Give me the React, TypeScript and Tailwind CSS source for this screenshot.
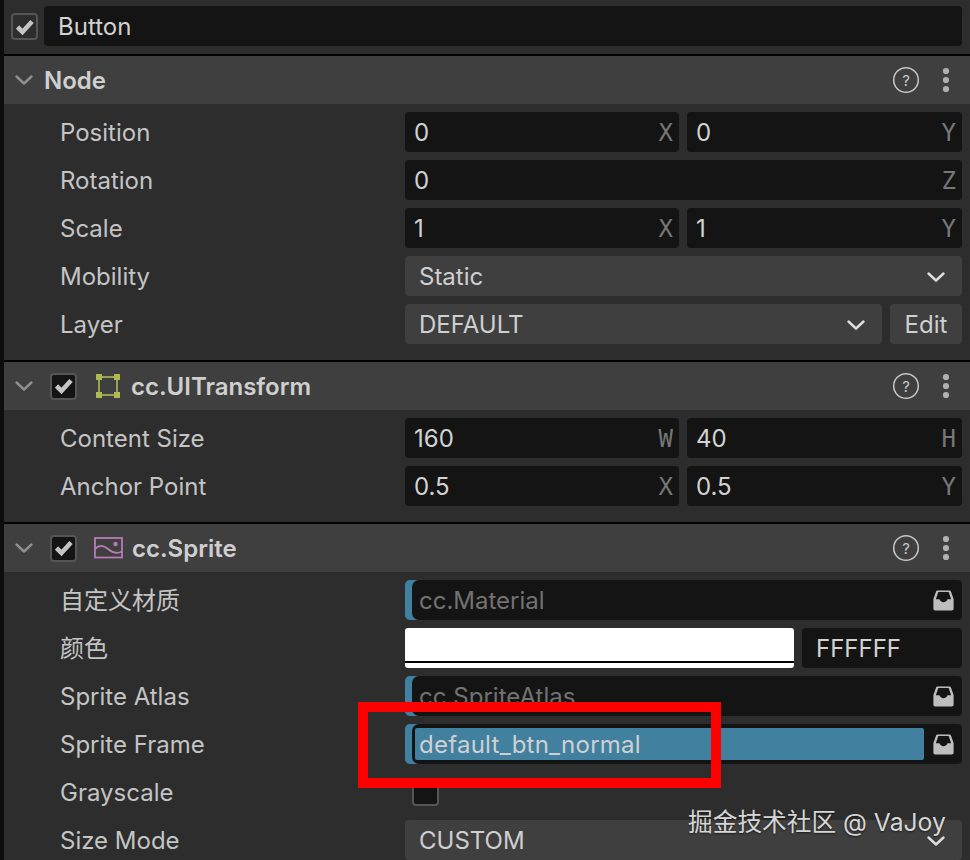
import React from "react";

const Chevron = ({ className = "" }: { className?: string }) => (
  <svg width="20" height="12" viewBox="0 0 20 12" className={className} fill="none" stroke="currentColor" strokeWidth="2.4" strokeLinecap="round" strokeLinejoin="round">
    <path d="M2.5 2.5 10 9.5 17.5 2.5" />
  </svg>
);

const Check = ({ dark = false, className = "" }: { dark?: boolean; className?: string }) => (
  <div className={`flex h-[27px] w-[27px] shrink-0 items-center justify-center rounded-[4px] border-2 border-[#555555] ${dark ? "bg-[#141414]" : "bg-[#2d2d2d]"} ${className}`}>
    <svg width="20" height="18" viewBox="0 0 20 18" fill="none" stroke="#c4c4c4" strokeWidth="4.6" strokeLinejoin="miter">
      <path d="M2.5 9 7.5 14 17 3.5" />
    </svg>
  </div>
);

const HelpMenu = () => (
  <div className="ml-auto flex items-center">
    <svg width="28" height="28" viewBox="0 0 28 28" fill="none" className="mr-[22px]">
      <circle cx="14" cy="14" r="12.3" stroke="#c8c8c8" strokeWidth="1.5" />
      <text x="14" y="19.5" textAnchor="middle" fontSize="15" fill="#c8c8c8" fontFamily="Inter, sans-serif">?</text>
    </svg>
    <svg width="8" height="26" viewBox="0 0 8 26" className="mr-[20px]">
      <circle cx="4" cy="4" r="3.1" fill="#b0b0b0" />
      <circle cx="4" cy="13" r="3.1" fill="#b0b0b0" />
      <circle cx="4" cy="22" r="3.1" fill="#b0b0b0" />
    </svg>
  </div>
);

const Header = ({ title, check, icon, tx }: { title: string; check?: boolean; icon?: React.ReactNode; tx: string }) => (
  <div className="flex h-[48px] items-center bg-[#3f3f3f]">
    <Chevron className="ml-[10px] mr-[14px] text-[#8f8f8f]" />
    {check && <Check dark className="ml-[2px]" />}
    {icon}
    <span className={`${tx} pt-[2px] text-[24px] font-semibold text-[#cfcfcf]`}>{title}</span>
    <HelpMenu />
  </div>
);

const Row = ({ label, children }: { label: string; children: React.ReactNode }) => (
  <div className="flex h-[40px] items-center pr-[8px]">
    <div className="w-[401px] shrink-0 pl-[56px] pt-[2px] text-[24px] text-[#c4c4c4]">{label}</div>
    <div className="flex min-w-0 flex-1 gap-[8px]">{children}</div>
  </div>
);

const Num = ({ v, a, first = false }: { v: string; a: string; first?: boolean }) => (
  <div className={`flex h-[40px] min-w-0 items-center justify-between rounded-[4px] bg-[#141414] pl-[9px] pr-[6px] pt-[2px] ${first ? "w-[274px] shrink-0" : "flex-1"}`}>
    <span className="text-[24px] text-[#d2d2d2]">{v}</span>
    <span className="font-['DejaVu_Sans_Mono',monospace] text-[24px] text-[#777777]">{a}</span>
  </div>
);

const Select = ({ v, cls = "flex-1", chev = "mr-[16px]" }: { v: string; cls?: string; chev?: string }) => (
  <div className={`flex h-[40px] min-w-0 ${cls} items-center justify-between rounded-[4px] bg-[#3f3f3f] pl-[14px] pt-[2px]`}>
    <span className="text-[24px] text-[#cfcfcf]">{v}</span>
    <Chevron className={`${chev} text-[#dddddd]`} />
  </div>
);

const Inbox = () => (
  <svg width="21" height="21" viewBox="0 0 22 22" className="shrink-0">
    <path fillRule="evenodd" fill="#bdbdbd" d="M5 0.5H17C18 0.5 18.6 1 19 2L21.6 9.5V19.5C21.6 20.8 20.8 21.5 19.5 21.5H2.5C1.2 21.5 0.4 20.8 0.4 19.5V9.5L3 2C3.4 1 4 0.5 5 0.5ZM5.6 2.2 3 9.8H6.8C7.4 11.6 9 12.8 11 12.8S14.6 11.6 15.2 9.8H19L16.4 2.2Z" />
  </svg>
);

const Asset = ({ v, active = false }: { v: string; active?: boolean }) => (
  <div className="flex h-[40px] flex-1 rounded-[5px] bg-[#41809f]">
    <div className={`ml-[7px] flex min-w-0 flex-1 items-center rounded-l-[7px] rounded-r-[4px] bg-[#141414] pr-[8px] ${active ? "pl-[3px]" : "pl-[7px]"}`}>
      <div className={`flex h-[32px] flex-1 items-center rounded-[2px] pr-[8px] pt-[2px] ${active ? "mr-[9px] bg-[#41809f] pl-[4px] text-[#d0d0d0]" : "text-[#727272]"}`}>
        <span className={`text-[24px] ${active ? "tracking-[0.25px]" : ""}`}>{v}</span>
      </div>
      <Inbox />
    </div>
  </div>
);

const Section = ({ children, cls = "pb-[16px]" }: { children: React.ReactNode; cls?: string }) => (
  <div className={`flex flex-col gap-[8px] pt-[8px] ${cls}`}>{children}</div>
);

const Line = () => <div className="h-[2px] bg-black" />;

export default function App() {
  return (
    <div className="relative h-[860px] w-[970px] overflow-hidden border-l-4 border-[#0d0d0d] bg-[#2d2d2d] font-['Inter','Noto_Sans_CJK_SC',sans-serif]">
      <div className="flex h-[54px] items-start gap-[6px] pl-[7px] pr-[8px] pt-[6px]">
        <Check className="mt-[7px]" />
        <div className="flex h-[40px] flex-1 items-center rounded-[4px] bg-[#141414] pl-[14px] pt-[2px] text-[24px] text-[#d2d2d2]">Button</div>
      </div>
      <Line />
      <Header title="Node" tx="ml-[-4px]" />
      <Section>
        <Row label="Position"><Num v="0" a="X" first /><Num v="0" a="Y" /></Row>
        <Row label="Rotation"><Num v="0" a="Z" /></Row>
        <Row label="Scale"><Num v="1" a="X" first /><Num v="1" a="Y" /></Row>
        <Row label="Mobility"><Select v="Static" /></Row>
        <Row label="Layer">
          <Select v="DEFAULT" />
          <div className="flex h-[40px] w-[72px] shrink-0 items-center justify-center rounded-[4px] bg-[#3f3f3f] pt-[2px] text-[24px] text-[#cfcfcf]">Edit</div>
        </Row>
      </Section>
      <Line />
      <Header
        title="cc.UITransform"
        check
        tx="ml-[11px]"
        icon={
          <svg width="24" height="24" viewBox="0 0 24 24" className="ml-[19px]">
            <rect x="3" y="3" width="18" height="18" fill="none" stroke="#99a052" strokeWidth="2" />
            <rect x="0" y="0" width="6" height="6" fill="#b0b851" />
            <rect x="18" y="0" width="6" height="6" fill="#b0b851" />
            <rect x="0" y="18" width="6" height="6" fill="#b0b851" />
            <rect x="18" y="18" width="6" height="6" fill="#b0b851" />
          </svg>
        }
      />
      <Section>
        <Row label="Content Size"><Num v="160" a="W" first /><Num v="40" a="H" /></Row>
        <Row label="Anchor Point"><Num v="0.5" a="X" first /><Num v="0.5" a="Y" /></Row>
      </Section>
      <Line />
      <Header
        title="cc.Sprite"
        check
        tx="ml-[9px]"
        icon={
          <svg width="29" height="22" viewBox="0 0 29 22" className="ml-[17px]" fill="none" stroke="#b77cb7" strokeWidth="1.8">
            <rect x="1" y="1" width="27" height="19.5" />
            <path d="M1 12C5 7.5 10 8.5 14 12S23 17 28 14.5" />
            <circle cx="21.5" cy="7" r="2.2" fill="#b77cb7" stroke="none" />
          </svg>
        }
      />
      <Section cls="pb-0">
        <Row label="自定义材质"><Asset v="cc.Material" /></Row>
        <Row label="颜色">
          <div className="flex h-[40px] flex-1 flex-col overflow-hidden rounded-[3px] bg-white">
            <div className="mt-[33px] h-[2px] bg-black" />
          </div>
          <div className="flex h-[40px] w-[160px] shrink-0 items-center rounded-[4px] bg-[#141414] pl-[14px] pt-[2px] text-[24px] text-[#d2d2d2]">FFFFFF</div>
        </Row>
        <Row label="Sprite Atlas"><Asset v="cc.SpriteAtlas" /></Row>
        <Row label="Sprite Frame"><Asset v="default_btn_normal" active /></Row>
        <Row label="Grayscale">
          <div className="ml-[7px] mt-[1px] h-[27px] w-[27px] rounded-[4px] border-2 border-[#555555] bg-[#141414]" />
        </Row>
        <Row label="Size Mode"><Select v="CUSTOM" /></Row>
      </Section>

      <div className="absolute left-[354px] top-[702px] h-[86px] w-[363px] border-[10px] border-[#ff0000]" />
      <div className="absolute left-[684px] top-[804px] text-[24.7px] text-[#d6d6d6] [text-shadow:0_1px_2px_rgba(0,0,0,0.6)]">掘金技术社区 @ VaJoy</div>
    </div>
  );
}
